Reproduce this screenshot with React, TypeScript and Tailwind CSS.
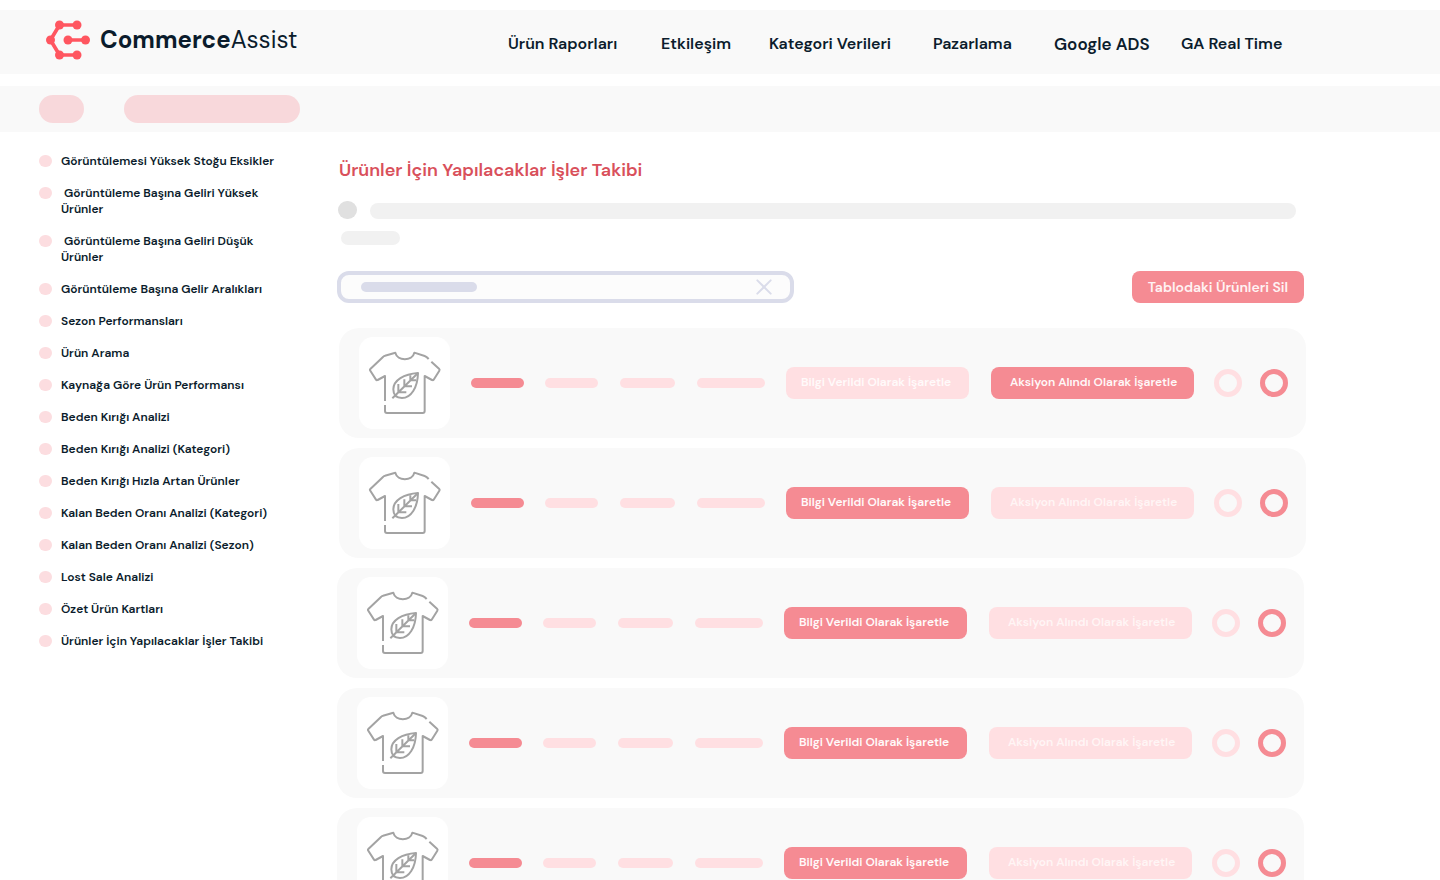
import { X } from "lucide-react";

const navItems = [
  "Ürün Raporları",
  "Etkileşim",
  "Kategori Verileri",
  "Pazarlama",
  "Google ADS",
  "GA Real Time",
];

const reports = [
  "Görüntülemesi Yüksek Stoğu Eksikler",
  "\u00a0Görüntüleme Başına Geliri Yüksek Ürünler",
  "\u00a0Görüntüleme Başına Geliri Düşük Ürünler",
  "Görüntüleme Başına Gelir Aralıkları",
  "Sezon Performansları",
  "Ürün Arama",
  "Kaynağa Göre Ürün Performansı",
  "Beden Kırığı Analizi",
  "Beden Kırığı Analizi (Kategori)",
  "Beden Kırığı Hızla Artan Ürünler",
  "Kalan Beden Oranı Analizi (Kategori)",
  "Kalan Beden Oranı Analizi (Sezon)",
  "Lost Sale Analizi",
  "Özet Ürün Kartları",
  "Ürünler İçin Yapılacaklar İşler Takibi",
];

type Task = { id: number; next: "inform" | "action"; shifted: boolean };

const tasks: Task[] = [
  { id: 1, next: "action", shifted: true },
  { id: 2, next: "inform", shifted: true },
  { id: 3, next: "inform", shifted: false },
  { id: 4, next: "inform", shifted: false },
  { id: 5, next: "inform", shifted: false },
];

function Logo() {
  return (
    <a href="#" className="flex items-center gap-2.5 text-[#0b1c2c]">
      <svg viewBox="0 0 46 42" className="h-[42px] w-[46px]" fill="#ff5660" aria-hidden="true">
        <path
          d="M33 6H15.500L6.500 21L15.500 36H33M24 21H41.500"
          fill="none"
          stroke="#ff5660"
          strokeWidth="3.600"
          strokeLinejoin="round"
        />
        <circle cx="15.500" cy="6" r="4.500" />
        <circle cx="33" cy="6" r="4.500" />
        <circle cx="6.500" cy="21" r="4.500" />
        <circle cx="24" cy="21" r="4.500" />
        <circle cx="41.500" cy="21" r="4.500" />
        <circle cx="15.500" cy="36" r="4.500" />
        <circle cx="33" cy="36" r="4.500" />
      </svg>
      <span className="text-2xl leading-8">
        <span className="font-bold">Commerce</span>
        <span className="font-normal">Assist</span>
      </span>
    </a>
  );
}

function ShirtIcon() {
  return (
    <svg
      viewBox="0 0 273 276"
      className="h-full w-full"
      fill="none"
      stroke="#a3a3a3"
      strokeWidth="6"
      strokeLinecap="butt"
      strokeLinejoin="round"
      aria-hidden="true"
    >
      <path d="M78 192V117L56 129Q53 131 51 128L33 100Q32 98 34 96L72 60Q74 57 78 56L109 47C115 73 160 73 166 47L197 57Q203 59 209 66" />
      <path d="M217 74L240 95Q243 98 241 101L224 128Q222 131 219 129L197 117V222Q197 228 191 228H84Q78 228 78 222V204" />
      <path d="M177 108C135 111 103 130 103 157C103 176 113 183 129 183C156 183 176 152 177 108Z" />
      <path d="M100 184L177 108M118 141V166H142M136 127V148H159M154 115V130H171" />
    </svg>
  );
}

function MarkButton({ label, active, className }: { label: string; active: boolean; className: string }) {
  return (
    <button
      type="button"
      className={`h-8 rounded-lg pb-0.5 text-left text-xs font-semibold whitespace-nowrap ${
        active ? "bg-[#f58b93] text-[#fff8f8]" : "bg-[#ffdfe2]"
      } ${className}`}
    >
      {label}
    </button>
  );
}

function TaskRow({ task }: { task: Task }) {
  return (
    <li
      className={`grid h-[110px] grid-cols-[112px_74fr_75fr_77fr_89fr_205fr_223fr_46fr_28fr] items-center rounded-[20px] bg-[#f9f9f9] pr-[18px] pl-5 ${
        task.shifted ? "ml-0.5" : "mr-0.5"
      }`}
    >
      <div className="h-[92px] w-[91px] rounded-[14px] bg-white">
        <ShirtIcon />
      </div>
      <div className="h-2.5 w-[53px] rounded-full bg-[#f58b93]" />
      <div className="h-2.5 w-[53px] rounded-full bg-[#ffdfe2]" />
      <div className="h-2.5 w-[55px] rounded-full bg-[#ffdfe2]" />
      <div className="h-2.5 w-[68px] rounded-full bg-[#ffdfe2]" />
      <MarkButton
        label="Bilgi Verildi Olarak İşaretle"
        active={task.next === "inform"}
        className="w-[183px] pl-[15px] text-[#fffafa]"
      />
      <MarkButton
        label="Aksiyon Alındı Olarak İşaretle"
        active={task.next === "action"}
        className="w-[203px] pl-[19px] text-[#fff5f5]"
      />
      <button type="button" aria-label="Geri al" className="size-7 rounded-full border-5 border-[#ffdfe2]" />
      <button type="button" aria-label="Sil" className="size-7 rounded-full border-5 border-[#f58b93]" />
    </li>
  );
}

export default function App() {
  return (
    <div className="min-h-screen bg-white pt-2.5 font-['DM_Sans','Inter',sans-serif] text-[#0b1c2c]">
      <header className="flex h-16 items-center bg-[#f9f9f9] pl-11">
        <div className="w-[464px] shrink-0 pb-1">
          <Logo />
        </div>
        <nav className="grid grid-cols-[153px_108px_164px_121px_127px_auto] items-center pt-1 font-semibold whitespace-nowrap">
          {navItems.map((item) => (
            <a key={item} href="#" className={item === "Google ADS" ? "text-[17px] leading-6" : "text-base"}>
              {item}
            </a>
          ))}
        </nav>
      </header>

      <div className="mt-3 flex h-[46px] items-center gap-10 bg-[#f9f9f9] pl-[39px]">
        <div className="h-7 w-[45px] rounded-full bg-[#f8d8db]" />
        <div className="h-7 w-44 rounded-full bg-[#f8d8db]" />
      </div>

      <div className="flex">
        <aside className="w-[337px] shrink-0 pt-[21px] pl-[39px]">
          <ul className="flex flex-col gap-4">
            {reports.map((report) => (
              <li key={report}>
                <a href="#" className="flex gap-[9px] text-xs font-semibold">
                  <span className="mt-0.5 h-3 w-[13px] shrink-0 rounded-full bg-[#fcdde0]" />
                  <span className="w-[220px]">{report}</span>
                </a>
              </li>
            ))}
          </ul>
        </aside>

        <main className="min-w-0 flex-1 pt-[26px] pr-[134px]">
          <h1 className="pl-0.5 text-lg leading-6 font-semibold text-[#d9505b]">
            Ürünler İçin Yapılacaklar İşler Takibi
          </h1>
          <div className="mt-[19px] flex items-end gap-[13px] pr-2.5 pl-px">
            <div className="h-[18px] w-[19px] rounded-full bg-[#e0e0e0]" />
            <div className="h-4 flex-1 rounded-full bg-[#f1f1f1]" />
          </div>
          <div className="mt-3 ml-1 h-3.5 w-[59px] rounded-full bg-[#f1f1f1]" />

          <div className="mt-[26px] flex items-center justify-between pr-0.5">
            <div className="flex h-8 w-[457px] items-center rounded-xl border-4 border-[#dadcea] bg-[#fcfcfc] pr-4 pl-5">
              <div className="h-2.5 w-[116px] rounded-full bg-[#dadcea]" />
              <input type="text" aria-label="Ürün ara" className="min-w-0 flex-1 bg-transparent px-2 text-xs outline-none" />
              <button type="button" aria-label="Temizle" className="text-[#dadcea]">
                <X className="size-5" viewBox="3 3 18 18" strokeWidth={1.8} />
              </button>
            </div>
            <button type="button" className="h-8 rounded-lg bg-[#f58b93] px-4 text-sm font-semibold text-[#fff3f4]">
              Tablodaki Ürünleri Sil
            </button>
          </div>

          <ul className="mt-[25px] flex flex-col gap-2.5">
            {tasks.map((task) => (
              <TaskRow key={task.id} task={task} />
            ))}
          </ul>
        </main>
      </div>
    </div>
  );
}
